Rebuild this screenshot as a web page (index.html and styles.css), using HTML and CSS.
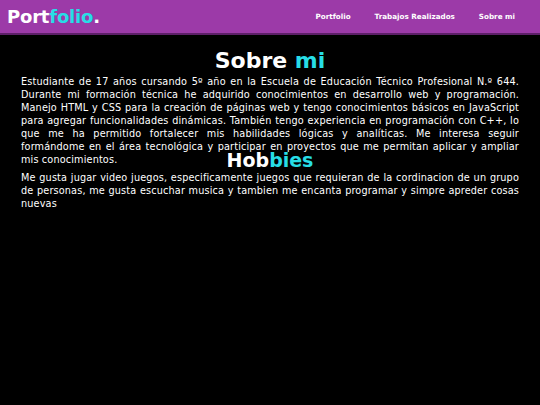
FILE: index.html
```html
<!DOCTYPE html>
<html lang="es">
<head>
<meta charset="utf-8">
<title>Portfolio</title>
<link rel="stylesheet" href="styles.css">
</head>
<body>
<header class="topbar">
  <div class="logo">Port<span class="accent">folio</span>.</div>
  <nav class="nav">
    <a href="#">Portfolio</a>
    <a href="#">Trabajos Realizados</a>
    <a href="#">Sobre mi</a>
  </nav>
</header>
<main class="content">
  <section class="about">
    <h1 class="title">Sobre <span class="accent">mi</span></h1>
    <p class="text">Estudiante de 17 años cursando 5º año en la Escuela de Educación Técnico Profesional N.º 644. Durante mi formación técnica he adquirido conocimientos en desarrollo web y programación. Manejo HTML y CSS para la creación de páginas web y tengo conocimientos básicos en JavaScript para agregar funcionalidades dinámicas. También tengo experiencia en programación con C++, lo que me ha permitido fortalecer mis habilidades lógicas y analíticas. Me interesa seguir formándome en el área tecnológica y participar en proyectos que me permitan aplicar y ampliar mis conocimientos.</p>
  </section>
  <section class="hobbies">
    <h2 class="title subtitle">Hob<span class="accent">bies</span></h2>
    <p class="text">Me gusta jugar video juegos, especificamente juegos que requieran de la cordinacion de un grupo de personas, me gusta escuchar musica y tambien me encanta programar y simpre apreder cosas nuevas</p>
  </section>
</main>
</body>
</html>
```
FILE: styles.css
```css
* { box-sizing: border-box; }
html, body { margin: 0; padding: 0; }
body {
  background: #000;
  color: #fff;
  font-family: "DejaVu Sans", "Noto Sans", sans-serif;
  width: 540px;
  height: 405px;
  overflow: hidden;
}
.accent { color: #27dde6; }
.topbar {
  height: 35px;
  background: #9c3aa8;
  border-bottom: 2px solid #5d1f68;
  display: flex;
  align-items: center;
  justify-content: space-between;
  padding: 0 25px 0 7px;
}
.logo {
  font-size: 18px;
  font-weight: bold;
  letter-spacing: -0.2px;
  color: #fff;
}
.nav {
  display: flex;
  gap: 24px;
}
.nav a {
  color: #fff;
  text-decoration: none;
  font-size: 7.2px;
  font-weight: bold;
}
.content {
  padding: 12px 21px 0 21px;
}
.title {
  margin: 0;
  text-align: center;
  font-size: 22px;
  line-height: 28px;
  font-weight: bold;
}
.subtitle {
  font-size: 19px;
  line-height: 22px;
}
.text {
  margin: 0;
  font-size: 9.7px;
  letter-spacing: 0.15px;
  line-height: 13px;
  text-align: justify;
}
.about {
  height: 102px;
}
```
